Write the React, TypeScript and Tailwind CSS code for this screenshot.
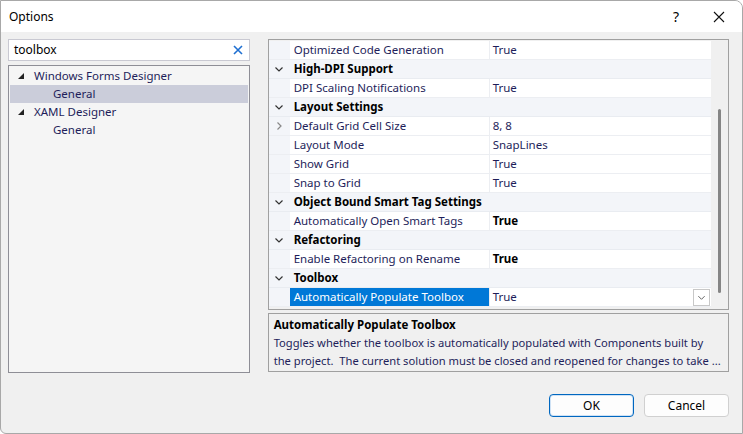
import React from "react";

type Row =
  | { kind: "cat"; name: string }
  | { kind: "prop"; name: string; value: string; bold?: boolean; expand?: boolean; selected?: boolean };

const rows: Row[] = [
  { kind: "prop", name: "Optimized Code Generation", value: "True" },
  { kind: "cat", name: "High-DPI Support" },
  { kind: "prop", name: "DPI Scaling Notifications", value: "True" },
  { kind: "cat", name: "Layout Settings" },
  { kind: "prop", name: "Default Grid Cell Size", value: "8, 8", expand: true },
  { kind: "prop", name: "Layout Mode", value: "SnapLines" },
  { kind: "prop", name: "Show Grid", value: "True" },
  { kind: "prop", name: "Snap to Grid", value: "True" },
  { kind: "cat", name: "Object Bound Smart Tag Settings" },
  { kind: "prop", name: "Automatically Open Smart Tags", value: "True", bold: true },
  { kind: "cat", name: "Refactoring" },
  { kind: "prop", name: "Enable Refactoring on Rename", value: "True", bold: true },
  { kind: "cat", name: "Toolbox" },
  { kind: "prop", name: "Automatically Populate Toolbox", value: "True", selected: true },
];

function ChevronDown() {
  return (
    <svg width="10" height="10" viewBox="0 0 10 10" fill="none" stroke="#333" strokeWidth="1.2">
      <path d="M1.5 3.5 L5 7 L8.5 3.5" />
    </svg>
  );
}

function ChevronRight() {
  return (
    <svg width="10" height="10" viewBox="0 0 10 10" fill="none" stroke="#888" strokeWidth="1.2">
      <path d="M3.5 1.5 L7 5 L3.5 8.5" />
    </svg>
  );
}

function TreeArrow() {
  return (
    <svg width="8" height="8" viewBox="0 0 8 8">
      <path d="M7 1 L7 7 L1 7 Z" fill="#222" />
    </svg>
  );
}

export default function App() {
  return (
    <div
      className="w-[743px] h-[434px] bg-[#f0f0f0] border border-[#a8a8a8] rounded-tr-[8px] rounded-bl-[6px] overflow-hidden flex flex-col text-[11.5px] text-[#1a1a1a]"
      style={{ fontFamily: '"Noto Sans", "Open Sans", sans-serif' }}
    >
      {/* title bar */}
      <div className="h-[31px] bg-white flex items-center shrink-0">
        <span className="pl-[8px] text-[12px] text-black">Options</span>
        <span className="ml-auto w-[40px] text-center text-[14px] text-black">?</span>
        <span className="w-[46px] flex justify-center">
          <svg width="12" height="12" viewBox="0 0 12 12" stroke="#111" strokeWidth="1.1">
            <path d="M1 1 L11 11 M11 1 L1 11" />
          </svg>
        </span>
      </div>

      <div className="flex flex-1 pl-[7px] pt-[7px] pr-[13px]">
        {/* left column */}
        <div className="w-[242px] flex flex-col">
          <div className="h-[22px] bg-white border border-[#c9c9d2] flex items-center pl-[5px] pr-[6px]">
            <span className="text-black text-[12px]">toolbox</span>
            <svg className="ml-auto" width="10" height="10" viewBox="0 0 10 10" stroke="#1e6fd1" strokeWidth="1.6">
              <path d="M1 1 L9 9 M9 1 L1 9" />
            </svg>
          </div>
          <div className="mt-[4px] h-[308px] bg-[#f5f5f5] border border-[#8e8e96] pt-[1px] px-[1px]">
            <div className="h-[18px] flex items-center pl-[7px]">
              <TreeArrow />
              <span className="ml-[9px] text-[#1e1e5a]">Windows Forms Designer</span>
            </div>
            <div className="h-[18px] flex items-center pl-[43px] bg-[#cbcdda]">
              <span className="text-[#1e1e5a]">General</span>
            </div>
            <div className="h-[18px] flex items-center pl-[7px]">
              <TreeArrow />
              <span className="ml-[9px] text-[#1e1e5a]">XAML Designer</span>
            </div>
            <div className="h-[18px] flex items-center pl-[43px]">
              <span className="text-[#1e1e5a]">General</span>
            </div>
          </div>
        </div>

        {/* right column */}
        <div className="ml-[18px] w-[462px] flex flex-col">
          <div className="h-[271px] border border-[#a0a0a0] bg-[#f0f0f0] flex">
            <div className="w-[442px] flex flex-col pt-[1px]">
              {rows.map((r, i) =>
                r.kind === "cat" ? (
                  <div key={i} className="h-[19px] flex items-center bg-[#f3f5f9] border-b border-[#e9ecf1]">
                    <span className="w-[21px] flex justify-center">
                      <ChevronDown />
                    </span>
                    <span className="pl-[4px] font-bold text-black">{r.name}</span>
                  </div>
                ) : (
                  <div key={i} className="h-[19px] flex bg-white border-b border-[#eceef2]">
                    <span className="w-[21px] bg-[#f3f5f9] flex items-center justify-center">
                      {r.expand && <ChevronRight />}
                    </span>
                    <span
                      className={
                        r.selected
                          ? "w-[199px] pl-[4px] flex items-center bg-[#0078d7] text-white"
                          : "w-[199px] pl-[4px] flex items-center text-[#1e1e5a]"
                      }
                    >
                      {r.name}
                    </span>
                    <span className="flex-1 border-l border-[#eceef2] pl-[3px] flex items-center">
                      <span className={r.bold ? "font-bold text-black" : "text-[#1e1e5a]"}>{r.value}</span>
                      {r.selected && (
                        <span className="ml-auto mr-[1px] w-[17px] h-[17px] border border-[#c8c8c8] bg-white flex items-center justify-center">
                          <svg width="9" height="9" viewBox="0 0 10 10" fill="none" stroke="#555" strokeWidth="1">
                            <path d="M1.5 3.5 L5 7 L8.5 3.5" />
                          </svg>
                        </span>
                      )}
                    </span>
                  </div>
                )
              )}
            </div>
            {/* scrollbar */}
            <div className="flex-1 flex justify-center pt-[69px]">
              <div className="w-[3px] h-[184px] bg-[#858585] rounded-full" />
            </div>
          </div>

          <div className="mt-[3px] h-[59px] border border-[#a0a0a0] bg-[#f0f0f0] px-[5px] pt-[2px] leading-[18px] whitespace-nowrap overflow-hidden">
            <div className="font-bold text-black">Automatically Populate Toolbox</div>
            <div className="text-[#1e1e5a] text-[11.2px]">Toggles whether the toolbox is automatically populated with Components built by</div>
            <div className="text-[#1e1e5a] text-[11.2px]">the project.&nbsp; The current solution must be closed and reopened for changes to take ...</div>
          </div>

          <div className="mt-[22px] flex justify-end gap-[10px]">
            <button className="w-[85px] h-[23px] rounded-[4px] bg-[#fdfdfd] border border-[#0067c0] shadow-[inset_0_0_0_1px_#cfe2f5] text-black text-[12px]">
              OK
            </button>
            <button className="w-[85px] h-[23px] rounded-[4px] bg-[#fdfdfd] border border-[#d0d0d0] text-black text-[12px]">
              Cancel
            </button>
          </div>
        </div>
      </div>
    </div>
  );
}
